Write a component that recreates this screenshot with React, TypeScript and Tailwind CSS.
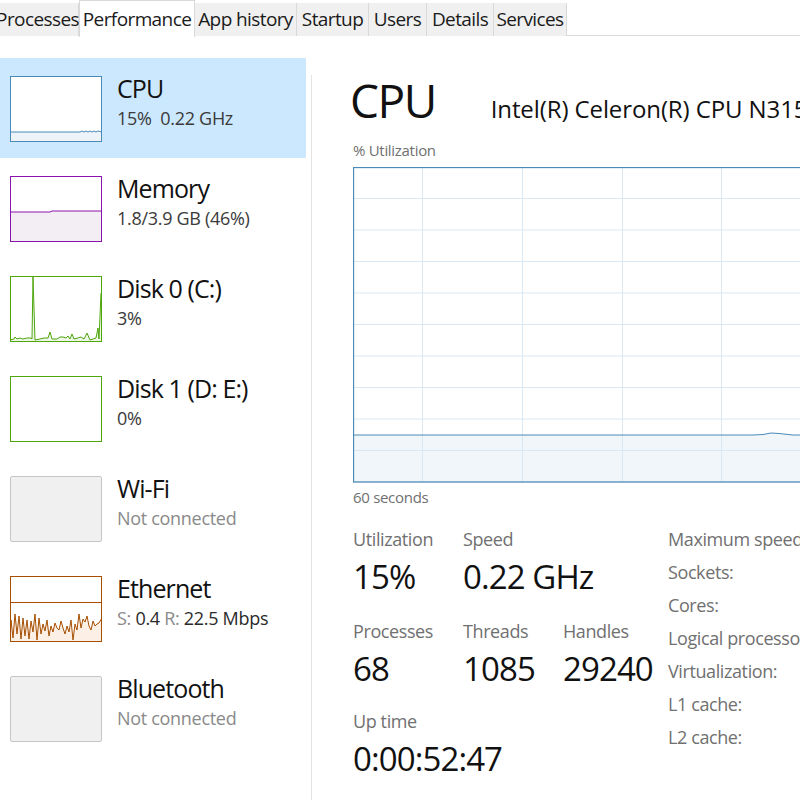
import React from 'react';

const FONT = { fontFamily: '"Segoe UI", "Open Sans", "Noto Sans", sans-serif' };

const TABS = [
  { label: 'Processes', w: 'w-[82px] -ml-[3px]' },
  { label: 'Performance', w: 'w-[116px]' },
  { label: 'App history', w: 'w-[102px]' },
  { label: 'Startup', w: 'w-[72px]' },
  { label: 'Users', w: 'w-[58px]' },
  { label: 'Details', w: 'w-[67px]' },
  { label: 'Services', w: 'w-[73px]' },
];

function Tabs() {
  return (
    <div className="flex h-[36px] border-b border-[#d9d9d9] bg-white">
      {TABS.map((t) => {
        const active = t.label === 'Performance';
        return (
          <div
            key={t.label}
            className={`${t.w} shrink-0 flex items-center justify-center text-[19px] tracking-[-0.6px] text-[#1a1a1a] border-r border-[#d9d9d9] ${
              active ? 'bg-white h-[37px] -mb-px border-l border-t' : 'bg-[#f0f0f0] mt-[3px] h-[33px]'
            }`}
          >
            {t.label}
          </div>
        );
      })}
    </div>
  );
}

type Thumb = 'cpu' | 'mem' | 'disk0' | 'disk1' | 'off' | 'eth';

function Thumbnail({ kind }: { kind: Thumb }) {
  const W = 92;
  const H = 66;
  if (kind === 'off') {
    return <div className="w-[92px] h-[66px] shrink-0 rounded-[2px] border border-[#c6c6c6] bg-[#f0f0f0]" />;
  }
  const stroke = {
    cpu: '#4a8ab8',
    mem: '#8b12ae',
    disk0: '#4da60c',
    disk1: '#4da60c',
    eth: '#a74f01',
  }[kind];
  const fill = {
    cpu: '#edf3f9',
    mem: '#f2eef3',
    disk0: '#eff7e9',
    disk1: '#eff7e9',
    eth: '#fcf0e6',
  }[kind];
  let line = '';
  if (kind === 'cpu') {
    line = 'M0 56 L70 56 L72 55 L74 56 L76 55 L78 56 L80 55 L82 56 L84 55 L86 56 L88 55 L92 56';
  } else if (kind === 'mem') {
    line = 'M0 36 L40 36 L42 35 L92 35';
  } else if (kind === 'disk0') {
    line =
      'M0 64 L4 63 L5 61 L7 63 L10 62 L13 63 L17 62 L21 62 L22 63 L23 1 L25 64 L30 63 L34 62 L38 62 L40 56 L42 63 L47 63 L50 61 L53 61 L56 62 L58 60 L60 63 L62 58 L64 63 L68 62 L71 61 L74 63 L77 57 L80 64 L83 63 L86 62 L88 52 L89 63 L91 17 L92 18';
  } else if (kind === 'eth') {
    line =
      'M0 64 L1 44 L3 62 L5 38 L7 58 L9 40 L11 63 L13 42 L15 60 L17 44 L19 63 L21 45 L23 56 L25 38 L27 64 L29 42 L31 58 L33 48 L35 55 L37 44 L39 60 L41 50 L43 56 L45 47 L47 52 L49 54 L51 45 L53 52 L55 58 L57 50 L59 56 L61 44 L63 64 L65 48 L67 54 L69 38 L71 52 L73 43 L75 46 L77 40 L79 50 L81 54 L83 45 L85 50 L87 48 L89 47 L92 42';
  }
  return (
    <svg width={W} height={H} viewBox={`0 0 ${W} ${H}`} className="shrink-0 bg-white">
      {line && <path d={`${line} L92 66 L0 66 Z`} fill={fill} stroke="none" />}
      {kind === 'eth' && <line x1="0" y1="26.5" x2="92" y2="26.5" stroke={stroke} strokeWidth="1" />}
      {line && <path d={line} fill="none" stroke={stroke} strokeWidth="1" />}
      <rect x="0.5" y="0.5" width={W - 1} height={H - 1} fill="none" stroke={stroke} strokeWidth="1" />
    </svg>
  );
}

type Item = {
  title: string;
  kind: Thumb;
  sub: React.ReactNode;
  active?: boolean;
};

const ITEMS: Item[] = [
  { title: 'CPU', kind: 'cpu', active: true, sub: <span className="text-[#3a3a3a]">15%&nbsp; 0.22 GHz</span> },
  { title: 'Memory', kind: 'mem', sub: <span className="text-[#3a3a3a]">1.8/3.9 GB (46%)</span> },
  { title: 'Disk 0 (C:)', kind: 'disk0', sub: <span className="text-[#3a3a3a]">3%</span> },
  { title: 'Disk 1 (D: E:)', kind: 'disk1', sub: <span className="text-[#3a3a3a]">0%</span> },
  { title: 'Wi-Fi', kind: 'off', sub: <span className="text-[#8a8a8a]">Not connected</span> },
  {
    title: 'Ethernet',
    kind: 'eth',
    sub: (
      <span>
        <span className="text-[#8a8a8a]">S:</span> <span className="text-[#2a2a2a]">0.4</span>{' '}
        <span className="text-[#8a8a8a]">R:</span> <span className="text-[#2a2a2a]">22.5 Mbps</span>
      </span>
    ),
  },
  { title: 'Bluetooth', kind: 'off', sub: <span className="text-[#8a8a8a]">Not connected</span> },
];

function Sidebar() {
  return (
    <div className="w-[306px] shrink-0 pt-[22px]">
      {ITEMS.map((it) => (
        <div
          key={it.title}
          className={`h-[100px] flex gap-[15px] pl-[10px] pt-[18px] ${it.active ? 'bg-[#cce8ff]' : ''}`}
        >
          <Thumbnail kind={it.kind} />
          <div className="flex flex-col -mt-[4px]">
            <div className="text-[25px] leading-[32px] tracking-[-0.9px] text-[#111]">{it.title}</div>
            <div className="text-[18px] leading-[26px] tracking-[-0.3px] mt-[1px]">{it.sub}</div>
          </div>
        </div>
      ))}
    </div>
  );
}

function UtilChart() {
  const W = 460;
  const H = 315;
  const vx = [69, 169, 269, 368];
  const hy = Array.from({ length: 9 }, (_, i) => (i + 1) * 31.5);
  const level = 268;
  const line = `M0 ${level} L400 ${level} L410 ${level - 0.5} L418 ${level - 2} L426 ${level - 1.5} L440 ${level} L${W} ${level}`;
  return (
    <svg width={W} height={H + 1} viewBox={`0 0 ${W} ${H + 1}`} className="block">
      <rect x="0" y="0" width={W} height={H} fill="#ffffff" />
      <path d={`${line} L${W} ${H} L0 ${H} Z`} fill="#f1f6fa" />
      {vx.map((x) => (
        <line key={x} x1={x + 0.5} y1="0" x2={x + 0.5} y2={H} stroke="#d9e8f3" strokeWidth="1" />
      ))}
      {hy.map((y) => (
        <line key={y} x1="0" y1={y} x2={W} y2={y} stroke="#d9e8f3" strokeWidth="1" />
      ))}
      <path d={line} fill="none" stroke="#4a8ab8" strokeWidth="1" />
      <rect x="0.5" y="0.5" width={W + 10} height={H - 0.5} fill="none" stroke="#4a8ab8" strokeWidth="1.3" />
    </svg>
  );
}

function Stat({ label, value, w }: { label: string; value: string; w: string }) {
  return (
    <div className={`${w} shrink-0`}>
      <div className="text-[18px] leading-[24px] tracking-[-0.4px] text-[#707070]">{label}</div>
      <div className="text-[33px] leading-[42px] tracking-[-0.9px] text-[#111] mt-[5px]">{value}</div>
    </div>
  );
}

const SPECS = ['Maximum speed:', 'Sockets:', 'Cores:', 'Logical processors:', 'Virtualization:', 'L1 cache:', 'L2 cache:'];

function Detail() {
  return (
    <div className="flex-1 min-w-0 overflow-hidden pl-[41px] pt-[36px]">
      <div className="flex items-baseline gap-[55px] whitespace-nowrap -ml-[3px]">
        <div className="text-[46px] leading-[56px] tracking-[-1.5px] text-[#111]">CPU</div>
        <div className="text-[24px] tracking-[-0.1px] text-[#111]">Intel(R) Celeron(R) CPU N3150 @ 1.60GHz</div>
      </div>
      <div className="text-[15px] leading-[20px] tracking-[-0.3px] text-[#707070] mt-[12px]">% Utilization</div>
      <div className="mt-[7px]">
        <UtilChart />
      </div>
      <div className="text-[15px] leading-[20px] tracking-[-0.3px] text-[#707070] mt-[4px]">60 seconds</div>
      <div className="flex mt-[20px] whitespace-nowrap">
        <div className="w-[315px] shrink-0">
          <div className="flex">
            <Stat label="Utilization" value="15%" w="w-[110px]" />
            <Stat label="Speed" value="0.22 GHz" w="w-[100px]" />
          </div>
          <div className="flex mt-[21px]">
            <Stat label="Processes" value="68" w="w-[110px]" />
            <Stat label="Threads" value="1085" w="w-[100px]" />
            <Stat label="Handles" value="29240" w="w-[100px]" />
          </div>
          <div className="flex mt-[19px]">
            <Stat label="Up time" value="0:00:52:47" w="w-[200px]" />
          </div>
        </div>
        <div className="flex flex-col">
          {SPECS.map((s) => (
            <div key={s} className="text-[18px] leading-[33px] first:-mt-[4px] tracking-[-0.4px] text-[#707070]">
              {s}
            </div>
          ))}
        </div>
      </div>
    </div>
  );
}

export default function App() {
  return (
    <div className="w-[800px] h-[800px] overflow-hidden bg-white" style={FONT}>
      <Tabs />
      <div className="flex h-[764px]">
        <Sidebar />
        <div className="w-px shrink-0 bg-[#e3e3e3] mt-[39px] ml-[5px]" />
        <Detail />
      </div>
    </div>
  );
}
